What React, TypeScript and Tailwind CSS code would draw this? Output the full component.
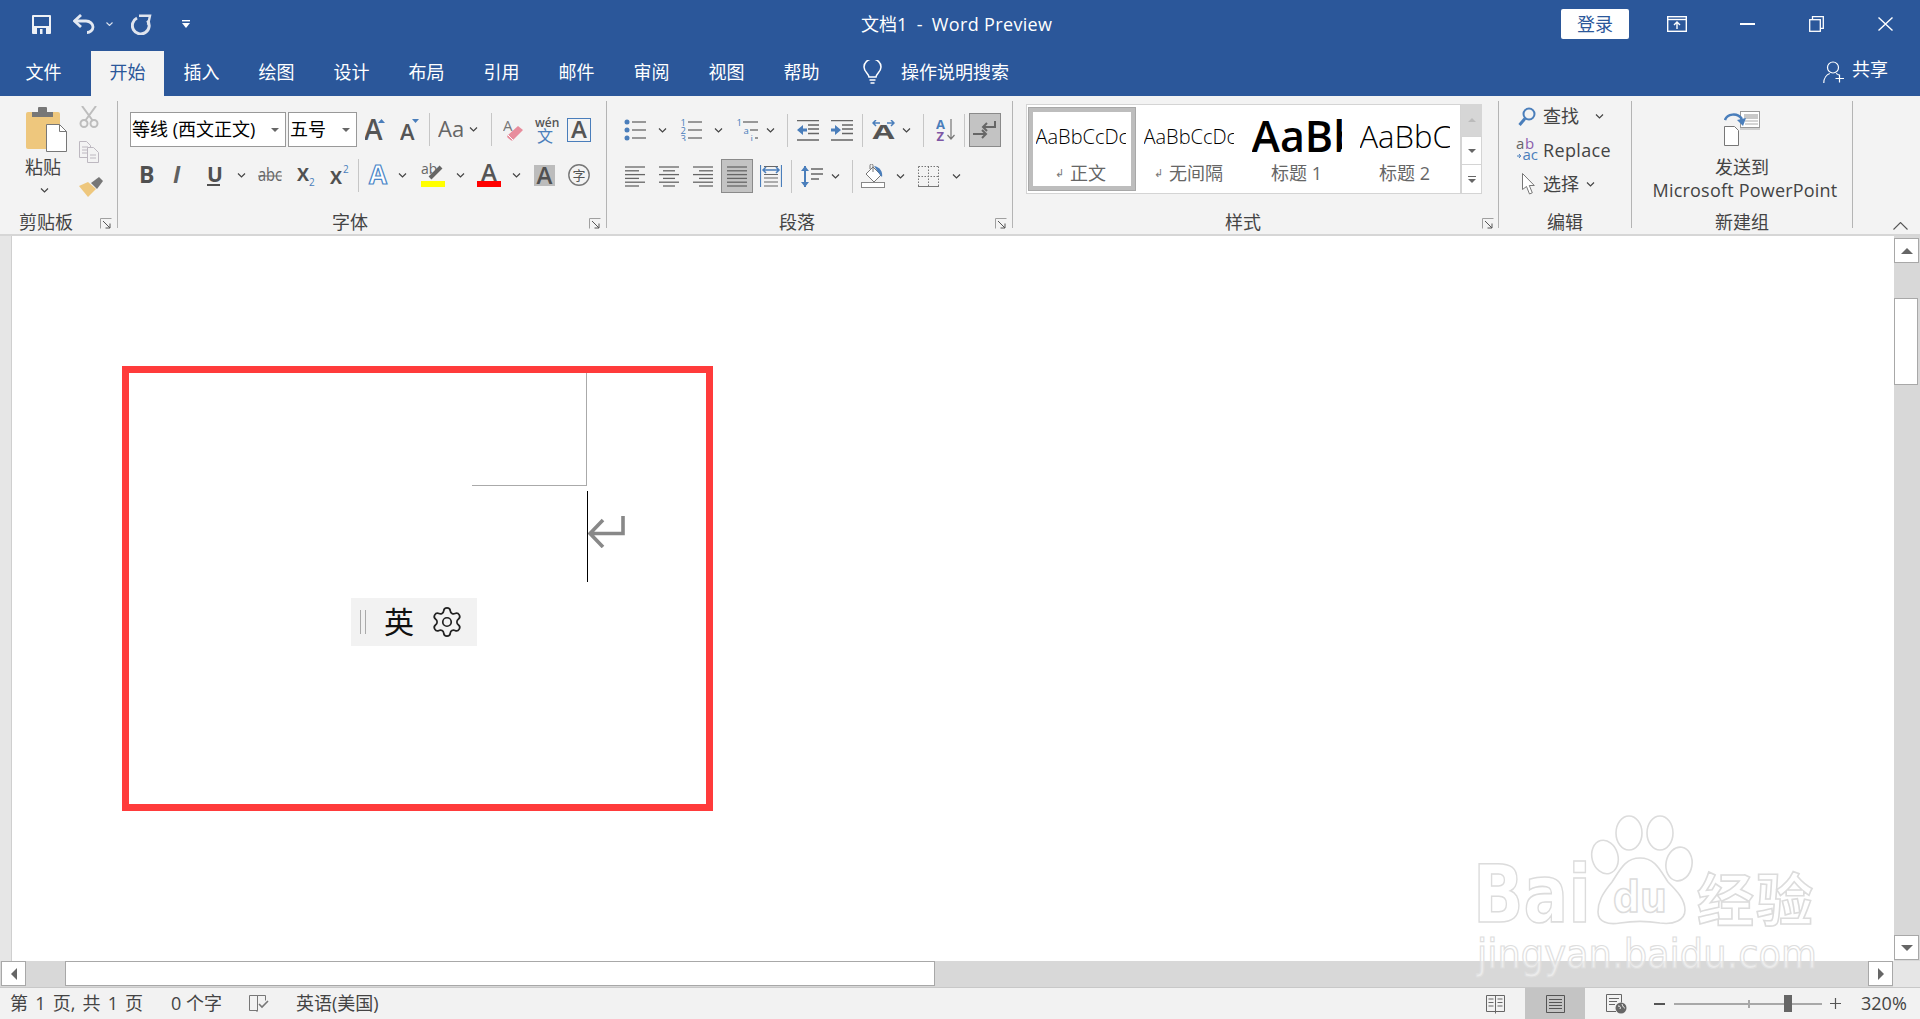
import { Settings } from "lucide-react";

const BLUE = "#4a7ebb";
const GRAY = "#666";

function Chev({ className = "" }: { className?: string }) {
  return (
    <svg className={`h-[5px] w-[9px] shrink-0 ${className}`} viewBox="0 0 9 5" fill="none" stroke="#444" strokeWidth="1.2">
      <path d="M1 .5l3.5 3.5L8 .5" />
    </svg>
  );
}

function Sep({ className = "" }: { className?: string }) {
  return <div className={`h-[33px] w-px shrink-0 bg-[#c6c6c6] ${className}`} />;
}

function Launcher() {
  return (
    <svg className="mt-[6px] h-[11px] w-[12px] shrink-0" viewBox="0 0 12 11" fill="none">
      <path d="M.5 10.5V.5H11.5" stroke="#a0a0a0" />
      <path d="M3 3l7 7M10 5.5V10H5.5" stroke="#555" />
    </svg>
  );
}

function GroupLabel({ text, className, launcher = true }: { text: string; className: string; launcher?: boolean }) {
  return (
    <div className={`flex h-[16px] leading-[20px] text-[18px] text-[#444] ${className}`}>
      <span>{text}</span>
      {launcher && <span className="ml-auto"><Launcher /></span>}
    </div>
  );
}

// lines for the alignment icons: [x1, x2] per row
function Lines({ rows, className = "" }: { rows: number[][]; className?: string }) {
  return (
    <svg className={`h-[21px] w-[20px] shrink-0 ${className}`} viewBox="0 0 20 21" stroke={GRAY} strokeWidth="1.3">
      {rows.map((r, i) => (
        <line key={i} x1={r[0]} x2={r[1]} y1={1 + i * 3.8} y2={1 + i * 3.8} />
      ))}
    </svg>
  );
}

function ListIcon({ marks, indent = false, className = "" }: { marks: string[]; indent?: boolean; className?: string }) {
  return (
    <svg className={`h-[22px] w-[22px] shrink-0 ${className}`} viewBox="0 0 22 22">
      {marks.map((m, i) => {
        const y = 3 + i * 8;
        const x = indent ? i * 7 : 0;
        return (
          <g key={i}>
            {m === "•" ? (
              <circle cx="3" cy={y} r="2.5" fill={BLUE} />
            ) : (
              <text x={x + 0.5} y={y + 3.5} fontSize="9.5" fill={BLUE}>{m}</text>
            )}
            <line x1={indent ? x + 7 + (i === 2 ? -2 : 0) : 8} x2={22} y1={y} y2={y} stroke={GRAY} strokeWidth="1.3" />
          </g>
        );
      })}
    </svg>
  );
}

function StyleCell({ preview, label, selected = false, mark = false, previewClass }: { preview: string; label: string; selected?: boolean; mark?: boolean; previewClass: string }) {
  return (
    <div className={`flex h-[84px] w-[108px] shrink-0 flex-col items-center border-[5px] ${selected ? "border-[#bdbdbd] outline outline-1 -outline-offset-1 outline-[#a8a8a8]" : "border-transparent"}`}>
      <div className={`mr-[3px] flex h-[49px] w-[90px] shrink-0 items-center overflow-hidden whitespace-nowrap text-black ${previewClass}`}>{preview}</div>
      <div className="mr-[3px] flex h-[24px] items-center text-[18px] text-[#666]">
        {mark && <span className="mr-[6px] text-[11px] text-[#777]">↲</span>}
        {label}
      </div>
    </div>
  );
}

function Watermark() {
  const stroke = { stroke: "#dcdcdc", strokeWidth: 1.6, fill: "#fff", fillOpacity: 0.55 };
  return (
    <svg className="pointer-events-none absolute left-[1470px] top-[810px] h-[175px] w-[350px]" viewBox="0 0 350 175">
      <text x="3" y="112" fontSize="80" fontWeight="700" fontFamily="'DejaVu Sans', sans-serif" textLength="118" lengthAdjust="spacingAndGlyphs" {...stroke}>Bai</text>
      <ellipse cx="135" cy="47" rx="13" ry="17" transform="rotate(-15 135 47)" {...stroke} />
      <ellipse cx="159" cy="23" rx="13" ry="17" {...stroke} />
      <ellipse cx="190" cy="23" rx="13" ry="17" {...stroke} />
      <ellipse cx="209" cy="54" rx="13" ry="17" transform="rotate(10 209 54)" {...stroke} />
      <path d="M170 48C155 48 150 60 142 72C132 84 128 92 128 102C128 112 138 115 150 113C162 111 178 111 190 113C204 115 215 110 215 100C215 90 208 82 198 72C190 60 185 48 170 48Z" {...stroke} />
      <text x="143" y="102" fontSize="42" fontWeight="700" fontFamily="'DejaVu Sans', sans-serif" textLength="54" lengthAdjust="spacingAndGlyphs" {...stroke}>du</text>
      <text x="227" y="111" fontSize="57" fontWeight="700" textLength="116" {...stroke}>经验</text>
      <text x="7" y="158" fontSize="40" fontFamily="'DejaVu Sans', sans-serif" textLength="340" lengthAdjust="spacingAndGlyphs" stroke="#dedede" strokeWidth="1.2" fill="#fff" fillOpacity="0.5">jingyan.baidu.com</text>
    </svg>
  );
}

function TitleBar() {
  return (
    <div className="flex h-[48px] shrink-0 items-center bg-[#2b579a] text-white">
      <svg className="ml-[32px] h-[19px] w-[19px] shrink-0" viewBox="0 0 19 19">
        <rect width="19" height="19" rx="1" fill="#eef1f6" />
        <rect x="2" y="2" width="15" height="9" fill="#2b579a" />
        <rect x="5" y="13" width="9" height="6" fill="#2b579a" />
        <rect x="8" y="14" width="2.500" height="5" fill="#eef1f6" />
      </svg>
      <svg className="ml-[22px] h-[20px] w-[22px] shrink-0" viewBox="0 0 22 20" fill="none" stroke="#e4e9f2" strokeWidth="2.8">
        <path d="M8 1L1.500 7 8 13" />
        <path d="M1.500 7H13C17 7 20 10 20 13C20 16 17 18.500 14 18.500" />
      </svg>
      <svg className="ml-[11px] h-[4px] w-[7px] shrink-0" viewBox="0 0 7 4" fill="none" stroke="#dbe2ee" strokeWidth="1.1">
        <path d="M.5.5L3.500 3.500 6.500.5" />
      </svg>
      <svg className="ml-[18px] h-[21px] w-[21px] shrink-0" viewBox="0 0 21 21" fill="none" stroke="#dfe4ee" strokeWidth="3">
        <path d="M6 4A8.400 8.400 0 1 0 16.500 6.500" />
        <path d="M8 1.700H19L17 10.700" strokeWidth="2.400" />
      </svg>
      <svg className="ml-[30px] h-[8px] w-[8px] shrink-0" viewBox="0 0 8 8" fill="#fff">
        <rect x="0" y="0" width="8" height="1.400" />
        <path d="M0 3h8L4 8z" />
      </svg>
      <div className="ml-[671px] shrink-0 whitespace-nowrap text-[18px]">文档1&nbsp; -&nbsp;&nbsp;<span className="tracking-[.35px]">Word Preview</span></div>
      <div className="ml-auto flex h-[30px] w-[68px] shrink-0 items-center justify-center rounded-[2px] bg-white text-[18px] text-[#2b579a]">登录</div>
      <svg className="ml-[38px] h-[16px] w-[20px] shrink-0" viewBox="0 0 20 16" fill="none" stroke="#fff" strokeWidth="1.4">
        <rect x=".7" y=".7" width="18.600" height="14.600" />
        <path d="M1 3.500h18" />
        <path d="M10 13V6M7 9l3-3 3 3" />
      </svg>
      <div className="ml-[53px] h-[1.5px] w-[15px] shrink-0 bg-white" />
      <svg className="ml-[54px] h-[16px] w-[15px] shrink-0" viewBox="0 0 15 16" fill="none" stroke="#fff" strokeWidth="1.3">
        <rect x=".7" y="3.700" width="10.600" height="11.600" />
        <path d="M3.500 3.500V.7h10.800v11.600h-3" />
      </svg>
      <svg className="ml-[54px] mr-[27px] h-[14px] w-[15px] shrink-0" viewBox="0 0 15 14" stroke="#fff" strokeWidth="1.4">
        <path d="M.5.5l14 13M14.500.5L.5 13.500" />
      </svg>
    </div>
  );
}

function Tab({ text, active = false, className = "" }: { text: string; active?: boolean; className?: string }) {
  return (
    <div className={`flex h-[45px] shrink-0 items-center justify-center pb-[2px] ${active ? "w-[73px] bg-[#f3f3f3] text-[#2b579a]" : "w-[75px] text-white"} ${className}`}>
      {text}
    </div>
  );
}

function TabRow() {
  return (
    <div className="flex h-[48px] shrink-0 items-end bg-[#2b579a] text-[18px] text-white">
      <Tab text="文件" className="ml-[6px]" />
      <Tab text="开始" active className="ml-[10px]" />
      {["插入", "绘图", "设计", "布局", "引用", "邮件", "审阅", "视图", "帮助"].map((t) => (
        <Tab key={t} text={t} />
      ))}
      <div className="flex h-[48px] items-center">
        <svg className="ml-[24px] h-[24px] w-[19px] shrink-0" viewBox="0 0 19 24" fill="none" stroke="#fff" strokeWidth="1.5">
          <path d="M6 17c0-3-5-5-5-10a8.500 8 0 0 1 17 0c0 5-5 7-5 10z" />
          <path d="M6.500 20h6M7.500 23h4" />
        </svg>
        <span className="ml-[19px]">操作说明搜索</span>
      </div>
      <div className="ml-auto mr-[32px] flex h-[48px] items-center">
        <svg className="h-[22px] w-[22px] shrink-0" viewBox="0 0 22 22" fill="none" stroke="#fff" strokeWidth="1.2">
          <circle cx="10" cy="6.500" r="5.500" />
          <path d="M.8 22c0-5 3-8.500 6-9.500M13 12.500c1 .3 2 .9 2.800 1.700" />
          <path d="M16.500 13.500v8M12.500 17.500h8.500" />
        </svg>
        <span className="ml-[7px] pb-[6px]">共享</span>
      </div>
    </div>
  );
}

function ClipboardGroup() {
  return (
    <section className="mt-[5px] flex h-[127px] w-[118px] shrink-0 flex-col border-r border-[#b4b4b4]">
      <div className="flex h-[111px]">
        <div className="ml-[25px] flex w-[46px] shrink-0 flex-col pt-[6px]">
          <svg className="ml-px h-[45px] w-[41px]" viewBox="0 0 41 45">
            <rect x="0" y="5" width="34" height="37" rx="2" fill="#eec77d" />
            <path d="M6 5h6V1a1 1 0 0 1 1-1h7a1 1 0 0 1 1 1v4h6v5H6z" fill="#777" />
            <path d="M20.500 17.500h13l7 7v20h-20z" fill="#fff" stroke="#777" />
            <path d="M33.500 17.500v7h7" fill="none" stroke="#777" />
          </svg>
          <div className="mt-[3px] text-[18px] leading-[24px] text-[#444]">粘贴</div>
          <Chev className="ml-[15px] mt-[9px]" />
        </div>
        <div className="ml-[8px] flex flex-col pt-[5px]">
          <svg className="h-[22px] w-[20px]" viewBox="0 0 20 22" fill="none" stroke="#bdbdbd" strokeWidth="2">
            <path d="M3 0l11 15M17 0L6 15" />
            <circle cx="5" cy="17.500" r="3.500" />
            <circle cx="15" cy="17.500" r="3.500" />
          </svg>
          <svg className="mt-[13px] h-[22px] w-[20px]" viewBox="0 0 20 22" fill="#f3f3f3" stroke="#bdb8c0">
            <path d="M.5.5h7l4 4v12H.5zM3 6h6M3 9h6M3 12h6" />
            <path d="M8.500 6.500h6l5 5v10h-11zM11 14h6M11 17h6" />
          </svg>
          <svg className="mt-[14px] h-[20px] w-[24px]" viewBox="0 0 24 20">
            <path d="M0 9l9-4 8 7-8 8z" fill="#eec77d" />
            <path d="M12 6l8-6 4 4-6 8z" fill="#777" />
          </svg>
        </div>
      </div>
      <GroupLabel text="剪贴板" className="pl-[19px] pr-[5px]" />
    </section>
  );
}

function FontGroup() {
  return (
    <section className="mt-[5px] flex h-[127px] w-[489px] shrink-0 flex-col border-r border-[#b4b4b4]">
      <div className="h-[111px] pt-[11px]">
        <div className="flex h-[35px] items-center">
          <div className="ml-[12px] flex h-[35px] w-[156px] shrink-0 items-center justify-between border border-[#999] bg-white pl-px pr-[6px] text-[18px] text-black">
            <span>等线 (西文正文)</span>
            <span className="h-0 w-0 border-x-[4px] border-t-[4px] border-x-transparent border-t-[#666]" />
          </div>
          <div className="ml-[2px] flex h-[35px] w-[69px] shrink-0 items-center justify-between border border-[#999] bg-white pl-px pr-[6px] text-[18px] text-black">
            <span>五号</span>
            <span className="h-0 w-0 border-x-[4px] border-t-[4px] border-x-transparent border-t-[#666]" />
          </div>
          <svg className="ml-[8px] h-[22px] w-[20px] shrink-0" viewBox="0 0 20 22">
            <text x="-1" y="21" fontSize="28" fontWeight="600" fill="#555">A</text>
            <path d="M13 4l3.500-4L20 4z" fill={BLUE} />
          </svg>
          <svg className="ml-[15px] h-[22px] w-[19px] shrink-0" viewBox="0 0 19 22">
            <text x="0" y="21" fontSize="22" fontWeight="600" fill="#555">A</text>
            <path d="M12 0h7l-3.500 4z" fill={BLUE} />
          </svg>
          <Sep className="ml-[10px]" />
          <svg className="ml-[8px] h-[22px] w-[25px] shrink-0" viewBox="0 0 25 22">
            <text x="0" y="18" fontSize="22" fontWeight="500" fill="#666">Aa</text>
          </svg>
          <Chev className="ml-[6px]" />
          <Sep className="ml-[13px]" />
          <svg className="ml-[11px] h-[24px] w-[20px] shrink-0" viewBox="0 0 20 24">
            <text x="0" y="13" fontSize="15" fill="#777">A</text>
            <path d="M5 17L15 8l5 4-10 10a2 2 0 0 1-2.500 0L5 20a2 2 0 0 1 0-3z" fill="#e88c9c" />
            <path d="M5 17l5 5" stroke="#fff" strokeWidth="1" />
          </svg>
          <svg className="ml-[12px] h-[24px] w-[20px] shrink-0 overflow-visible" viewBox="0 0 20 24">
            <text x="0" y="9" fontSize="12" fontWeight="600" fill="#555">wén</text>
            <text x="2" y="24" fontSize="16" fill={BLUE}>文</text>
          </svg>
          <svg className="ml-[12px] h-[24px] w-[24px] shrink-0" viewBox="0 0 24 24">
            <rect x=".5" y=".5" width="23" height="23" fill="none" stroke={BLUE} />
            <text x="12" y="20" fontSize="24" fontWeight="600" fill="#555" textAnchor="middle">A</text>
          </svg>
        </div>
        <div className="mt-[11px] flex h-[34px] items-center">
          <span className="ml-[21px] w-[14px] shrink-0 pb-[2px] text-[23px] font-bold leading-none text-[#505050]">B</span>
          <span className="ml-[20px] w-[12px] shrink-0 pb-[2px] text-[23px] font-bold italic leading-none text-[#606060]">I</span>
          <span className="ml-[22px] w-[13px] shrink-0 border-b-2 border-[#505050] text-[21px] font-bold leading-[19px] text-[#505050]">U</span>
          <Chev className="ml-[17px]" />
          <svg className="ml-[12px] h-[20px] w-[24px] shrink-0" viewBox="0 0 24 20">
            <text x="0" y="16" fontSize="18" fill="#666" textLength="24" lengthAdjust="spacingAndGlyphs">abc</text>
            <path d="M0 11h24" stroke="#666" />
          </svg>
          <svg className="ml-[15px] h-[22px] w-[18px] shrink-0 overflow-visible" viewBox="0 0 18 22">
            <text x="0" y="17" fontSize="18" fontWeight="700" fill="#505050">X</text>
            <text x="12" y="22" fontSize="10" fill={BLUE}>2</text>
          </svg>
          <svg className="ml-[15px] h-[22px] w-[19px] shrink-0 overflow-visible" viewBox="0 0 19 22">
            <text x="0" y="20" fontSize="18" fontWeight="700" fill="#505050">X</text>
            <text x="13" y="9" fontSize="10" fill={BLUE}>2</text>
          </svg>
          <Sep className="ml-[9px]" />
          <svg className="ml-[11px] h-[22px] w-[17px] shrink-0 overflow-visible" viewBox="0 0 17 22">
            <text x="-1" y="20" fontSize="26" fontWeight="700" fill="#fff" stroke="#4a86c8" strokeWidth="1.200">A</text>
          </svg>
          <Chev className="ml-[11px]" />
          <svg className="ml-[14px] h-[24px] w-[24px] shrink-0" viewBox="0 0 24 24">
            <text x="0" y="11" fontSize="14" fill="#666">ab</text>
            <path d="M9 15L20 4" stroke="#666" strokeWidth="4" />
            <rect x="0" y="18" width="24" height="6" fill="#ffff00" />
          </svg>
          <Chev className="ml-[11px]" />
          <svg className="ml-[12px] h-[24px] w-[24px] shrink-0" viewBox="0 0 24 24">
            <text x="12" y="18" fontSize="24" fontWeight="600" fill="#555" textAnchor="middle">A</text>
            <rect x="0" y="18" width="24" height="6" fill="#ff0000" />
          </svg>
          <Chev className="ml-[11px]" />
          <svg className="ml-[13px] h-[21px] w-[21px] shrink-0" viewBox="0 0 21 21">
            <rect width="21" height="21" fill="#bcbcbc" />
            <text x="10.500" y="18.500" fontSize="24" fontWeight="600" fill="#505050" textAnchor="middle">A</text>
          </svg>
          <svg className="ml-[13px] h-[22px] w-[22px] shrink-0" viewBox="0 0 22 22">
            <circle cx="11" cy="11" r="10.200" fill="none" stroke="#777" strokeWidth="1.400" />
            <text x="11" y="16" fontSize="13" fill="#555" textAnchor="middle">字</text>
          </svg>
        </div>
      </div>
      <GroupLabel text="字体" className="pl-[214px] pr-[5px]" />
    </section>
  );
}

function ParagraphGroup() {
  const left = [[0, 20], [0, 14], [0, 20], [0, 14], [0, 20], [0, 14]];
  const center = [[0, 20], [4, 16], [0, 20], [4, 16], [0, 20], [4, 16]];
  const right = [[0, 20], [6, 20], [0, 20], [6, 20], [0, 20], [6, 20]];
  const full = [[0, 20], [0, 20], [0, 20], [0, 20], [0, 20], [0, 20]];
  return (
    <section className="mt-[5px] flex h-[127px] w-[406px] shrink-0 flex-col border-r border-[#b4b4b4]">
      <div className="h-[111px] pt-[12px]">
        <div className="flex h-[34px] items-center">
          <ListIcon marks={["•", "•", "•"]} className="ml-[17px]" />
          <Chev className="ml-[12px]" />
          <ListIcon marks={["1", "2", "3"]} className="ml-[13px]" />
          <Chev className="ml-[12px]" />
          <ListIcon marks={["1", "a", "i"]} indent className="ml-[13px]" />
          <Chev className="ml-[8px]" />
          <Sep className="ml-[12px]" />
          <svg className="ml-[9px] h-[21px] w-[22px] shrink-0" viewBox="0 0 22 21" stroke={GRAY} strokeWidth="1.3">
            <path d="M0 .5h22M11 5h11M11 9h11M11 13.500h11M0 20h22" />
            <path d="M0 10l6-5v3.500h4v3H6V15z" fill={BLUE} stroke="none" />
          </svg>
          <svg className="ml-[12px] h-[21px] w-[22px] shrink-0" viewBox="0 0 22 21" stroke={GRAY} strokeWidth="1.3">
            <path d="M0 .5h22M11 5h11M11 9h11M11 13.500h11M0 20h22" />
            <path d="M10 10L4 5v3.500H0v3h4V15z" fill={BLUE} stroke="none" />
          </svg>
          <Sep className="ml-[9px]" />
          <svg className="ml-[9px] h-[20px] w-[23px] shrink-0" viewBox="0 0 23 20">
            <path d="M1 3h7M4 0L1 3l3 3M22 3h-7M19 0l3 3-3 3" fill="none" stroke={BLUE} strokeWidth="1.500" />
            <text x="11.500" y="19" fontSize="20" fontWeight="700" fill="#555" textAnchor="middle" textLength="22" lengthAdjust="spacingAndGlyphs">A</text>
          </svg>
          <Chev className="ml-[7px]" />
          <Sep className="ml-[12px]" />
          <svg className="ml-[12px] h-[22px] w-[19px] shrink-0" viewBox="0 0 19 22">
            <text x="0" y="10" fontSize="13" fontWeight="700" fill={BLUE}>A</text>
            <text x="0.500" y="22" fontSize="13" fontWeight="700" fill="#7e57a5">Z</text>
            <path d="M15 0v20M11.500 16l3.500 4 3.500-4" fill="none" stroke="#777" strokeWidth="1.200" />
          </svg>
          <Sep className="ml-[9px]" />
          <div className="ml-[4px] flex h-[34px] w-[32px] shrink-0 items-center justify-center border border-[#8a8a8a] bg-[#c3c3c3]">
            <svg className="h-[18px] w-[24px]" viewBox="0 0 24 18" fill="none" stroke="#666" strokeWidth="2">
              <path d="M22 0v6H10M14 2L10 6l4 4" />
              <path d="M0 13h13M9 9l4 4-4 4" />
            </svg>
          </div>
        </div>
        <div className="mt-[12px] flex h-[34px] items-center">
          <Lines rows={left} className="ml-[18px]" />
          <Lines rows={center} className="ml-[14px]" />
          <Lines rows={right} className="ml-[14px]" />
          <div className="ml-[8px] flex h-[34px] w-[32px] shrink-0 items-center justify-center border border-[#8a8a8a] bg-[#c3c3c3]">
            <Lines rows={full} />
          </div>
          <svg className="ml-[7px] h-[22px] w-[22px] shrink-0" viewBox="0 0 22 22" stroke={GRAY} strokeWidth="1.200">
            <path d="M.5 0v22M21.500 0v22" stroke={BLUE} />
            <path d="M4 1.500h14M4 9.500h14M4 13h14M4 17h14M4 21h14" />
            <path d="M3 5h16M6 2L3 5l3 3M16 2l3 3-3 3" fill="none" stroke={BLUE} strokeWidth="1.500" />
          </svg>
          <Sep className="ml-[9px]" />
          <svg className="ml-[9px] h-[23px] w-[22px] shrink-0" viewBox="0 0 22 23">
            <path d="M4 1v21" stroke={BLUE} strokeWidth="2" />
            <path d="M0 6l4-5 4 5zM0 17l4 5 4-5z" fill={BLUE} />
            <path d="M10 4h12M10 9h12M10 14h8" stroke={GRAY} strokeWidth="1.300" />
          </svg>
          <Chev className="ml-[8px]" />
          <Sep className="ml-[12px]" />
          <svg className="ml-[8px] h-[24px] w-[24px] shrink-0" viewBox="0 0 24 24">
            <path d="M12 3l8 8-7 7-8-8z" fill="#fff" stroke="#777" />
            <path d="M9 5V1.500a1.500 1.500 0 0 1 3 0V8" fill="none" stroke="#777" />
            <path d="M13 2c6 1 9 6 8 11l-2-2z" fill={BLUE} />
            <rect x=".5" y="18.500" width="23" height="5" fill="#fff" stroke="#888" />
          </svg>
          <Chev className="ml-[11px]" />
          <svg className="ml-[13px] h-[21px] w-[21px] shrink-0" viewBox="0 0 21 21" fill="none" stroke="#777">
            <path d="M.5.5h20M.5 10.500h20M.5.500v20M10.500.500v20M20.500.500v20" strokeDasharray="1.500 1.500" />
            <path d="M0 20.500h21" />
          </svg>
          <Chev className="ml-[13px]" />
        </div>
      </div>
      <GroupLabel text="段落" className="pl-[172px] pr-[5px]" />
    </section>
  );
}

function StylesGroup() {
  return (
    <section className="mt-[5px] flex h-[127px] w-[486px] shrink-0 flex-col border-r border-[#b4b4b4]">
      <div className="h-[111px] pt-[3px]">
        <div className="ml-[13px] flex h-[90px] w-[456px]">
          <div className="flex h-[90px] w-[435px] shrink-0 overflow-hidden border border-[#d4d4d4] bg-white pl-px pt-[2px]">
            <StyleCell preview="AaBbCcDcEe" label="正文" selected mark previewClass="text-[20px] font-light" />
            <StyleCell preview="AaBbCcDcEe" label="无间隔" mark previewClass="text-[20px] font-light" />
            <StyleCell preview="AaBbCc" label="标题 1" previewClass="text-[43px] font-semibold" />
            <StyleCell preview="AaBbCc" label="标题 2" previewClass="text-[31px] font-light" />
          </div>
          <div className="flex w-[21px] shrink-0 flex-col">
            <div className="flex h-[32px] items-center justify-center bg-[#d6d6d6]">
              <span className="h-0 w-0 border-x-[4px] border-b-[4px] border-x-transparent border-b-[#bbb]" />
            </div>
            <div className="flex h-[29px] items-center justify-center border border-[#d4d4d4] bg-white">
              <span className="h-0 w-0 border-x-[4px] border-t-[4px] border-x-transparent border-t-[#666]" />
            </div>
            <div className="flex h-[29px] flex-col items-center justify-center gap-[2px] border border-t-0 border-[#d4d4d4] bg-white">
              <span className="h-px w-[8px] bg-[#666]" />
              <span className="h-0 w-0 border-x-[4px] border-t-[4px] border-x-transparent border-t-[#666]" />
            </div>
          </div>
        </div>
      </div>
      <GroupLabel text="样式" className="pl-[212px] pr-[4px]" />
    </section>
  );
}

function EditingGroup() {
  return (
    <section className="mt-[5px] flex h-[127px] w-[133px] shrink-0 flex-col border-r border-[#b4b4b4]">
      <div className="h-[111px] text-[18px] text-[#444]">
        <div className="flex h-[30px] items-center">
          <svg className="ml-[19px] h-[19px] w-[18px] shrink-0" viewBox="0 0 18 19" fill="none" stroke={BLUE}>
            <circle cx="11" cy="7" r="5.500" strokeWidth="2" />
            <path d="M7 11.500L1.500 18" strokeWidth="3" />
          </svg>
          <span className="ml-[7px]">查找</span>
          <Chev className="ml-[16px] w-[8px]" />
        </div>
        <div className="mt-[2px] flex h-[34px] items-center">
          <svg className="ml-[17px] h-[22px] w-[22px] shrink-0 overflow-visible" viewBox="0 0 22 22">
            <text x="0" y="10" fontSize="15" fill="#666">a</text>
            <text x="9" y="10" fontSize="15" fill="#8b5ead">b</text>
            <path d="M5 17H1.500M3 15l-1.700 2L3 19" transform="scale(-1 1) translate(-6 0)" fill="none" stroke={BLUE} />
            <text x="6.500" y="21" fontSize="15" fill={BLUE}>ac</text>
          </svg>
          <span className="ml-[5px] tracking-[.35px]">Replace</span>
        </div>
        <div className="flex h-[34px] items-center">
          <svg className="ml-[23px] h-[22px] w-[13px] shrink-0" viewBox="0 0 13 22" fill="#fff" stroke="#777">
            <path d="M.5.5v16l4-3 3 7.500 2.800-1.200-3-7.300h5z" />
          </svg>
          <span className="ml-[8px]">选择</span>
          <Chev className="ml-[7px] w-[8px]" />
        </div>
      </div>
      <GroupLabel text="编辑" className="pl-[48px]" launcher={false} />
    </section>
  );
}

function NewGroup() {
  return (
    <section className="mt-[5px] flex h-[127px] w-[221px] shrink-0 flex-col border-r border-[#b4b4b4]">
      <div className="flex h-[111px] flex-col items-center pt-[9px] text-[18px] text-[#444]">
        <svg className="h-[36px] w-[36px] shrink-0" viewBox="0 0 36 36" fill="none">
          <rect x="16.500" y="1.500" width="19" height="16" fill="#fff" stroke="#999" />
          <rect x="20" y="4" width="14" height="5" fill="#c8c8c8" />
          <path d="M21 11h13M21 14h13M16 19h20" stroke="#aaa" />
          <path d="M.5 16.500h10l4 4v15H.5z" fill="#fff" stroke="#777" />
          <path d="M1 10c2-6 12-8 17-1" stroke={BLUE} strokeWidth="2.500" />
          <path d="M13 10l6 6 3-8z" fill={BLUE} />
        </svg>
        <div className="mt-[9px] leading-[24px]">发送到</div>
        <div className="ml-[6px] whitespace-nowrap leading-[23px] tracking-[.2px]">Microsoft PowerPoint</div>
      </div>
      <GroupLabel text="新建组" className="pl-[83px]" launcher={false} />
    </section>
  );
}

function Ribbon() {
  return (
    <div className="flex h-[140px] shrink-0 border-b-2 border-[#d6d6d6] bg-[#f3f3f3]">
      <ClipboardGroup />
      <FontGroup />
      <ParagraphGroup />
      <StylesGroup />
      <EditingGroup />
      <NewGroup />
      <svg className="ml-[40px] mt-[126px] h-[8px] w-[15px] shrink-0" viewBox="0 0 15 8" fill="none" stroke="#555" strokeWidth="1.100">
        <path d="M.5 7.500L7.500.5l7 7" />
      </svg>
    </div>
  );
}

function ScrollBtn({ dir }: { dir: "up" | "down" | "left" | "right" }) {
  const tri =
    dir === "up" ? "border-x-[6px] border-b-[6px] border-x-transparent border-b-[#666]"
    : dir === "down" ? "border-x-[6px] border-t-[6px] border-x-transparent border-t-[#666]"
    : dir === "left" ? "border-y-[6px] border-r-[6px] border-y-transparent border-r-[#666]"
    : "border-y-[6px] border-l-[6px] border-y-transparent border-l-[#666]";
  return (
    <div className="flex h-[25px] w-[25px] shrink-0 items-center justify-center border border-[#a8a8a8] bg-white">
      <span className={`h-0 w-0 ${tri}`} />
    </div>
  );
}

function Document() {
  return (
    <div className="flex min-h-0 flex-1">
      <div className="w-[12px] shrink-0 border-r border-[#cfcfcf] bg-[#e6e6e6]" />
      <div className="relative flex-1 bg-white">
        <div className="absolute left-[110px] top-[130px] h-[445px] w-[591px] border-[7px] border-[#ff3b3b]" />
        <div className="absolute left-[460px] top-[137px] h-[113px] w-[115px] border-b border-r border-[#aaa]" />
        <div className="absolute left-[575px] top-[255px] h-[91px] w-px bg-black" />
        <svg className="absolute left-[576px] top-[280px] h-[32px] w-[37px]" viewBox="0 0 37 32" fill="none" stroke="#888" strokeWidth="3.600">
          <path d="M35 0v17.500H2M15 4L2 17.500 15 31" />
        </svg>
        <div className="absolute left-[339px] top-[362px] flex h-[48px] w-[126px] items-center bg-[#f2f2f2]">
          <div className="ml-[9px] h-[24px] w-[6px] border-x border-[#aaa]" />
          <span className="ml-[18px] text-[30px] leading-none text-[#111]">英</span>
          <Settings className="ml-[16px] h-[34px] w-[34px]" strokeWidth={1.2} color="#222" />
        </div>
      </div>
      <div className="flex w-[26px] shrink-0 flex-col bg-[#d8d8d8]">
        <div className="mt-[2px]"><ScrollBtn dir="up" /></div>
        <div className="mt-[35px] h-[87px] w-[24px] border border-[#a8a8a8] bg-white" />
        <div className="mb-px mt-auto"><ScrollBtn dir="down" /></div>
      </div>
    </div>
  );
}

function HScroll() {
  return (
    <div className="flex h-[26px] shrink-0 bg-[#d8d8d8]">
      <div className="ml-px"><ScrollBtn dir="left" /></div>
      <div className="ml-[39px] h-[25px] w-[870px] border border-[#a8a8a8] bg-white" />
      <div className="ml-[933px]"><ScrollBtn dir="right" /></div>
      <div className="flex-1 bg-[#e6e6e6]" />
    </div>
  );
}

function StatusBar() {
  return (
    <div className="flex h-[32px] shrink-0 items-center border-t border-[#c8c8c8] bg-[#f2f2f2] text-[18px] text-[#444]">
      <span className="ml-[10px] w-[131px] shrink-0 whitespace-nowrap [word-spacing:2.5px]">第 1 页, 共 1 页</span>
      <span className="ml-[30px] w-[51px] shrink-0 whitespace-nowrap">0 个字</span>
      <svg className="ml-[27px] h-[18px] w-[21px] shrink-0" viewBox="0 0 21 18" fill="none" stroke="#777">
        <path d="M.5.5h8v15h-8zM8.500 15.500V.5h8v5M8 17v-2" />
        <path d="M10 9l3 3 6-6" strokeWidth="1.600" />
      </svg>
      <span className="ml-[26px] whitespace-nowrap">英语(美国)</span>
      <svg className="ml-auto h-[20px] w-[19px] shrink-0" viewBox="0 0 19 20" fill="none" stroke="#666">
        <path d="M.5 1.500h18v16h-18zM9.500 1.500v18M2.500 5h5M2.500 8.500h5M2.500 12h5M11.500 5h5M11.500 8.500h5M11.500 12h5" />
      </svg>
      <div className="ml-[20px] flex h-[31px] w-[60px] shrink-0 items-center justify-center bg-[#c4c4c4]">
        <svg className="h-[18px] w-[19px]" viewBox="0 0 19 18" fill="none" stroke="#555">
          <path d="M.5.5h18v17H.5zM3 4.500h13M3 7.500h13M3 10.500h13M3 13.500h13" />
        </svg>
      </div>
      <svg className="ml-[21px] h-[20px] w-[21px] shrink-0" viewBox="0 0 21 20" fill="none" stroke="#666">
        <path d="M10 17.500H.5V.5h15v8M3 4.500h10M3 7.500h8M3 10.500h6" />
        <circle cx="15" cy="14" r="5.500" fill="#666" stroke="none" />
        <path d="M12 12c2 0 3 1 2 3M16 10c1 3 2 4 3 4" stroke="#f2f2f2" />
      </svg>
      <div className="ml-[27px] h-[2px] w-[11px] shrink-0 bg-[#555]" />
      <div className="ml-[9px] flex h-[18px] w-[148px] shrink-0 items-center">
        <div className="h-[2px] w-[74px] bg-[#a8a8a8]" />
        <div className="h-[8px] w-[2px] bg-[#a8a8a8]" />
        <div className="h-[2px] w-[34px] bg-[#a8a8a8]" />
        <div className="h-[17px] w-[8px] bg-[#666]" />
        <div className="h-[2px] w-[30px] bg-[#a8a8a8]" />
      </div>
      <svg className="ml-[8px] h-[11px] w-[11px] shrink-0" viewBox="0 0 11 11" stroke="#555" strokeWidth="1.200">
        <path d="M0 5.500h11M5.500 0v11" />
      </svg>
      <span className="ml-[20px] mr-[11px] w-[48px] whitespace-nowrap">320%</span>
    </div>
  );
}

export default function App() {
  return (
    <div className="relative flex h-[1019px] w-[1920px] flex-col overflow-hidden bg-white font-['Open_Sans','Noto_Sans_CJK_SC',sans-serif]">
      <TitleBar />
      <TabRow />
      <Ribbon />
      <Document />
      <HScroll />
      <StatusBar />
      <Watermark />
    </div>
  );
}
